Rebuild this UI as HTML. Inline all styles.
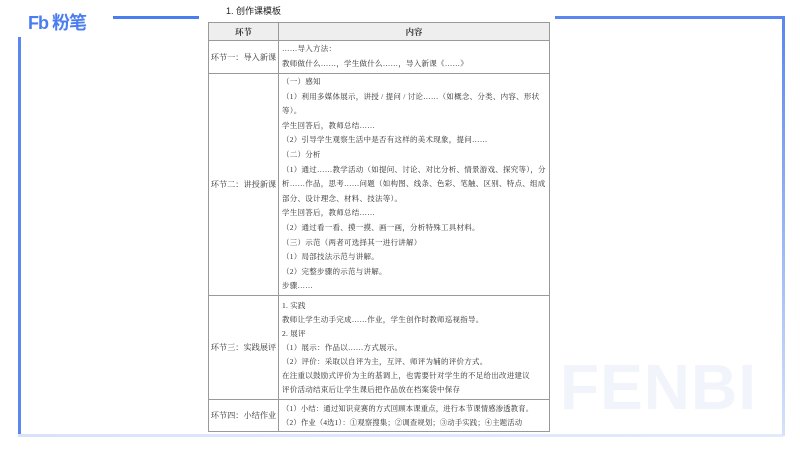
<!DOCTYPE html>
<html><head><meta charset="utf-8"><style>
*{margin:0;padding:0;box-sizing:border-box}
body{width:800px;height:450px;background:#fff;position:relative;overflow:hidden;font-family:"Liberation Serif","Noto Serif CJK SC",serif;color:#333}
.a{position:absolute}
.logo{left:28px;top:9px;font:bold 18px "Liberation Sans","Noto Sans CJK SC",sans-serif;color:#4a7df0;letter-spacing:-1px}
table{position:absolute;left:208px;top:22px;width:341px;border-collapse:collapse;font-size:8.2px;table-layout:fixed}
td{border:1px solid #999;vertical-align:middle;overflow:hidden}
td.l{text-align:center;padding:0;white-space:nowrap}
td.r{padding:1px 3px;line-height:14.6px;font-size:7.5px;letter-spacing:0.25px;color:#2a2a2a}
th{border:1px solid #999;background:#eee;height:18px;font-size:8.4px;font-weight:bold}
.fen{left:560px;top:350px;font:bold 64px "Liberation Sans",sans-serif;color:#f1f4fb;letter-spacing:1px}
</style></head><body>
<div class="a logo">Fb 粉笔</div>
<div class="a" style="left:113px;top:16px;width:86px;height:3px;background:#4a7df0"></div>
<div class="a" style="left:18px;top:37px;width:3px;height:399px;background:#5a86f0"></div>
<div class="a" style="left:18px;top:434px;width:765px;height:3px;background:linear-gradient(90deg,#d8e3fb,#e3eafc)"></div>
<div class="a" style="left:555px;top:16px;width:230px;height:3px;background:#5a86f0"></div>
<div class="a" style="left:782px;top:16px;width:3px;height:420px;background:linear-gradient(#5a86f0,#d6e2fb)"></div>
<div class="a fen">FENBI</div>
<div class="a" style="left:226px;top:4px;font:9px 'Liberation Sans','Noto Sans CJK SC',sans-serif;color:#222">1. 创作课模板</div>
<table>
<colgroup><col style="width:70px"><col style="width:271px"></colgroup>
<tr><th>环节</th><th>内容</th></tr>
<tr style="height:33px"><td class="l">环节一：导入新课</td><td class="r">……导入方法：<br>教师做什么……，学生做什么……，导入新课《……》</td></tr>
<tr style="height:222px"><td class="l">环节二：讲授新课</td><td class="r">（一）感知<br>（1）利用多媒体展示，讲授 / 提问 / 讨论……（如概念、分类、内容、形状等）。<br>学生回答后，教师总结……<br>（2）引导学生观察生活中是否有这样的美术现象，提问……<br>（二）分析<br>（1）通过……教学活动（如提问、讨论、对比分析、情景游戏、探究等），分析……作品，思考……问题（如构图、线条、色彩、笔触、区别、特点、组成部分、设计理念、材料、技法等）。<br>学生回答后，教师总结……<br>（2）通过看一看、摸一摸、画一画，分析特殊工具材料。<br>（三）示范（两者可选择其一进行讲解）<br>（1）局部技法示范与讲解。<br>（2）完整步骤的示范与讲解。<br>步骤……</td></tr>
<tr style="height:104px"><td class="l">环节三：实践展评</td><td class="r" style="line-height:14px">1. 实践<br>教师让学生动手完成……作业，学生创作时教师巡视指导。<br>2. 展评<br>（1）展示：作品以……方式展示。<br>（2）评价：采取以自评为主，互评、师评为辅的评价方式。<br>在注重以鼓励式评价为主的基调上，也需要针对学生的不足给出改进建议<br>评价活动结束后让学生课后把作品放在档案袋中保存</td></tr>
<tr style="height:32px"><td class="l">环节四：小结作业</td><td class="r" style="line-height:14px;white-space:nowrap;font-size:7.3px;letter-spacing:0.2px">（1）小结：通过知识竞赛的方式回顾本课重点，进行本节课情感渗透教育。<br>（2）作业（4选1）：①观察搜集；②调查规划；③动手实践；④主题活动</td></tr>
</table>
</body></html>
